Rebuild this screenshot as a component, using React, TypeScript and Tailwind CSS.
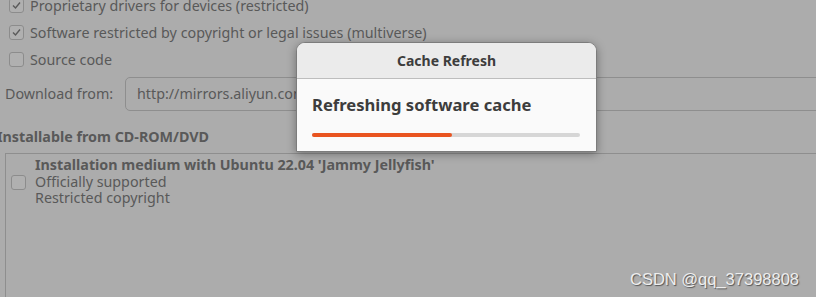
const font = { fontFamily: '"Noto Sans", "DejaVu Sans", sans-serif' };

const Check = ({ checked }: { checked?: boolean }) => (
  <span className="flex h-[15px] w-[15px] shrink-0 items-center justify-center rounded-[3px] border border-[#8c8c8c] bg-[#b0b0b0]">
    {checked && (
      <svg width="11" height="11" viewBox="0 0 11 11" fill="none">
        <path d="M2 5.5 L4.5 8 L9 2.5" stroke="#5a5a5a" strokeWidth="1.4" />
      </svg>
    )}
  </span>
);

export default function App() {
  return (
    <div
      className="relative h-[297px] w-[816px] overflow-hidden bg-[#acacac] text-[14.3px] text-[#595959]"
      style={font}
    >
      <div className="flex flex-col">
        <div className="mt-[-8px] flex h-[27px] items-center gap-[6px] pl-[9px]">
          <Check checked />
          <span>Proprietary drivers for devices (restricted)</span>
        </div>
        <div className="flex h-[27px] items-center gap-[6px] pl-[9px]">
          <Check checked />
          <span>Software restricted by copyright or legal issues (multiverse)</span>
        </div>
        <div className="flex h-[27px] items-center gap-[6px] pl-[9px]">
          <Check />
          <span>Source code</span>
        </div>
        <div className="mt-[4px] flex items-center pl-[5px]">
          <span className="w-[120px] shrink-0 whitespace-nowrap">Download from:</span>
          <div className="flex h-[34px] w-[760px] shrink-0 items-center whitespace-nowrap rounded-[5px] border border-[#8e8e8e] px-[11px]">
            http://mirrors.aliyun.com/ubuntu
          </div>
        </div>
        <div className="mt-[15px] ml-[-3px] whitespace-nowrap font-bold">Installable from CD-ROM/DVD</div>
        <div className="mt-[6px] ml-[5px] h-[200px] w-[900px] shrink-0 border border-[#8e8e8e]">
          <div className="flex items-center gap-[9px] pl-[5px] pt-[3px] leading-[16.5px]">
            <Check />
            <div className="flex flex-col">
              <span className="font-bold">Installation medium with Ubuntu 22.04 'Jammy Jellyfish'</span>
              <span>Officially supported</span>
              <span>Restricted copyright</span>
            </div>
          </div>
        </div>
      </div>

      <div className="absolute left-[296px] top-[42px] w-[301px] overflow-hidden rounded-t-[9px] border border-[#7c7c7c] bg-[#fafafa] shadow-[0_2px_10px_rgba(0,0,0,0.35)]">
        <div className="flex h-[36px] items-center justify-center border-b border-[#bdbdbd] bg-[#ebebeb] text-[14px] font-bold text-[#3d3d3d]">
          Cache Refresh
        </div>
        <div className="px-[15px] pb-[14px] pt-[14px]">
          <div className="text-[16.6px] font-bold text-[#3d3d3d]">Refreshing software cache</div>
          <div className="mt-[15px] h-[4px] w-[268px] rounded-full bg-[#d6d6d6]">
            <div className="h-[4px] w-[140px] rounded-full bg-[#e95420]" />
          </div>
        </div>
      </div>

      <div
        className="absolute left-[630px] top-[267px] text-[16.5px] text-[#eeeeee] [text-shadow:1px_1px_1px_#555]"
        style={{ fontFamily: '"Liberation Sans", Arial, sans-serif' }}
      >
        CSDN @qq_37398808
      </div>
    </div>
  );
}
